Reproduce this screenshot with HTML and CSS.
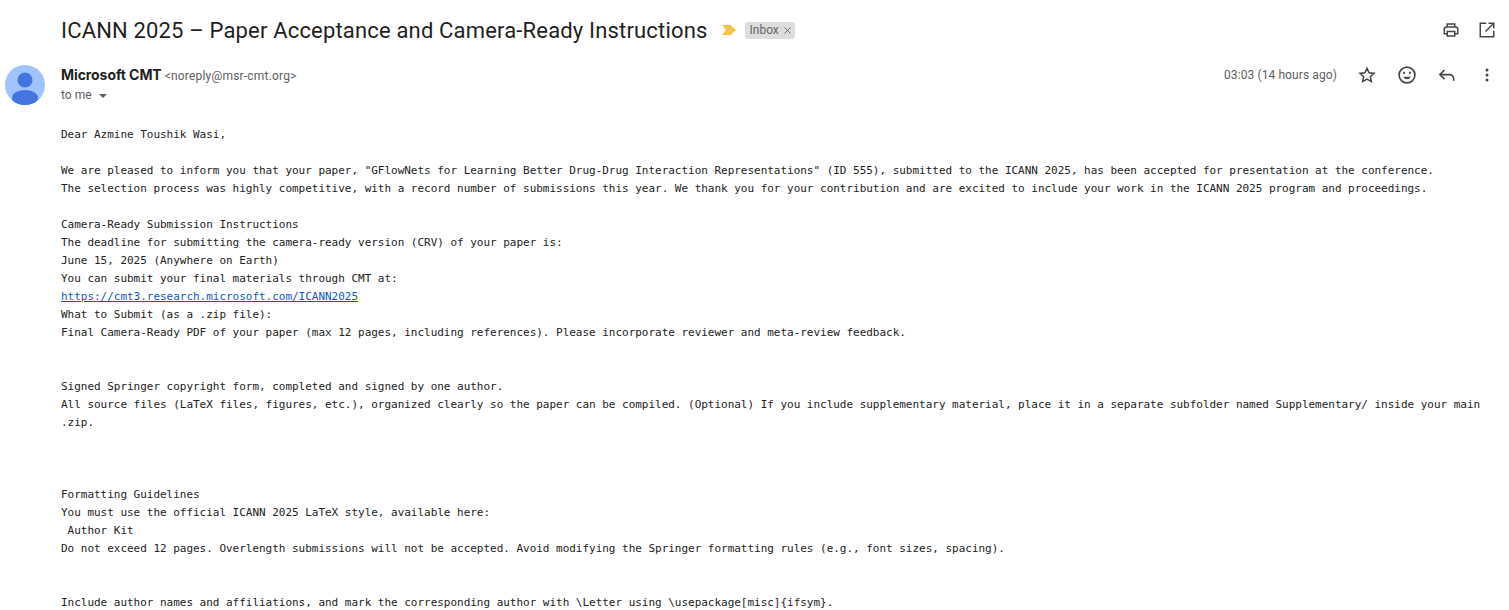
FILE: index.html
```html
<!DOCTYPE html>
<html lang="en">
<head>
  <meta charset="UTF-8">
  <title>ICANN 2025 – Paper Acceptance and Camera-Ready Instructions</title>
  <link rel="stylesheet" href="styles.css">
</head>
<body>
  <div class="subject-row">
    <h1 class="subject">ICANN 2025 – Paper Acceptance and Camera-Ready Instructions</h1>
    <svg class="marker" width="14" height="10" viewBox="0 0 14 10"><path d="M0 0h8.500L14 5l-5.500 5H0l4-5z" fill="#f6c344"/></svg>
    <span class="label">Inbox<svg class="label-x" width="7" height="7" viewBox="0 0 7 7" fill="none" stroke="#666" stroke-width="1"><path d="M.5.500l6 6M6.500.500l-6 6"/></svg></span>
    <div class="subject-tools">
      <svg width="18" height="18" viewBox="0 0 24 24" fill="none" stroke="#444746" stroke-width="2"><path d="M7 8V4h10v4"/><path d="M7 17H3v-6a3 3 0 0 1 3-3h12a3 3 0 0 1 3 3v6h-4"/><path d="M7 14h10v6H7z"/></svg>
      <svg width="18" height="18" viewBox="0 0 24 24" fill="none" stroke="#444746" stroke-width="2"><path d="M11 3H3v18h18v-8"/><path d="M14 3h7v7"/><path d="M21 3 10 14"/></svg>
    </div>
  </div>

  <div class="sender-row">
    <svg class="avatar" width="40" height="40" viewBox="0 0 40 40"><defs><clipPath id="round"><circle cx="20" cy="20" r="20"/></clipPath></defs><g clip-path="url(#round)"><rect width="40" height="40" fill="#a0c3ff"/><circle cx="20" cy="15" r="7.500" fill="#4374e0"/><ellipse cx="20" cy="33" rx="13" ry="8" fill="#4374e0"/></g></svg>
    <div class="sender-info">
      <div class="sender-line"><span class="sender-name">Microsoft CMT</span><span class="sender-mail">&lt;noreply@msr-cmt.org&gt;</span></div>
      <div class="to-line">to me<span class="caret"></span></div>
    </div>
    <div class="sender-tools">
      <span class="time">03:03 (14 hours ago)</span>
      <svg class="tool" width="20" height="20" viewBox="0 0 24 24" fill="none" stroke="#444746" stroke-width="1.800"><path d="M12 4l2.500 5.400 5.900.7-4.400 4 1.200 5.800L12 17l-5.200 2.900L8 14.100l-4.400-4 5.900-.7z"/></svg>
      <svg class="tool" width="20" height="20" viewBox="0 0 24 24" fill="none" stroke="#444746" stroke-width="2"><circle cx="12" cy="12" r="9.500"/><circle cx="8.500" cy="9.500" r="1.300" fill="#444746" stroke="none"/><circle cx="15.500" cy="9.500" r="1.300" fill="#444746" stroke="none"/><path d="M7.500 14c1 2 2.600 3 4.500 3s3.500-1 4.500-3z" fill="#444746" stroke="none"/></svg>
      <svg class="tool" width="20" height="20" viewBox="0 0 24 24" fill="none" stroke="#444746" stroke-width="2"><path d="M9 6 3.500 11.500 9 17"/><path d="M4 11.500h11a5 5 0 0 1 5 5V19"/></svg>
      <svg class="tool" width="20" height="20" viewBox="0 0 24 24" fill="#444746"><circle cx="12" cy="6" r="1.800"/><circle cx="12" cy="12" r="1.800"/><circle cx="12" cy="18" r="1.800"/></svg>
    </div>
  </div>

  <div class="message">Dear Azmine Toushik Wasi,

We are pleased to inform you that your paper, "GFlowNets for Learning Better Drug-Drug Interaction Representations" (ID 555), submitted to the ICANN 2025, has been accepted for presentation at the conference.
The selection process was highly competitive, with a record number of submissions this year. We thank you for your contribution and are excited to include your work in the ICANN 2025 program and proceedings.

Camera-Ready Submission Instructions
The deadline for submitting the camera-ready version (CRV) of your paper is:
June 15, 2025 (Anywhere on Earth)
You can submit your final materials through CMT at:
<a href="#">https://cmt3.research.microsoft.com/ICANN2025</a>
What to Submit (as a .zip file):
Final Camera-Ready PDF of your paper (max 12 pages, including references). Please incorporate reviewer and meta-review feedback.


Signed Springer copyright form, completed and signed by one author.
All source files (LaTeX files, figures, etc.), organized clearly so the paper can be compiled. (Optional) If you include supplementary material, place it in a separate subfolder named Supplementary/ inside your main .zip.



Formatting Guidelines
You must use the official ICANN 2025 LaTeX style, available here:
 Author Kit
Do not exceed 12 pages. Overlength submissions will not be accepted. Avoid modifying the Springer formatting rules (e.g., font sizes, spacing).


Include author names and affiliations, and mark the corresponding author with \Letter using \usepackage[misc]{ifsym}.</div>
</body>
</html>
```
FILE: styles.css
```css
body {
  margin: 0;
  background: #fff;
  color: #222;
  font-family: Roboto, sans-serif;
  height: 610px;
  overflow: hidden;
}

.subject-row {
  display: flex;
  align-items: center;
  height: 44px;
  padding: 8px 13px 0 61px;
}

.subject {
  margin: 0;
  font-size: 22px;
  font-weight: 400;
  letter-spacing: 0.17px;
  color: #1f1f1f;
}

.marker {
  margin-left: 14px;
}

.label {
  display: flex;
  align-items: center;
  gap: 5px;
  margin-left: 9px;
  padding: 0 4px 0 5px;
  height: 17px;
  background: #dddddd;
  border-radius: 3px;
  font-size: 12px;
  color: #666;
}

.subject-tools {
  margin-left: auto;
  display: flex;
  gap: 18px;
}

.sender-row {
  display: flex;
  margin-top: 13px;
  padding-left: 5px;
  height: 59px;
}

.sender-info {
  margin-left: 16px;
}

.sender-line {
  height: 20px;
  line-height: 20px;
}

.sender-name {
  font-family: Inter, sans-serif;
  font-size: 14px;
  font-weight: 700;
  letter-spacing: -0.08px;
  color: #1f1f1f;
}

.sender-mail {
  margin-left: 3px;
  font-size: 12px;
  letter-spacing: 0.2px;
  color: #5e5e5e;
}

.to-line {
  margin-top: 1px;
  font-size: 12px;
  line-height: 18px;
  color: #5e5e5e;
}

.caret {
  display: inline-block;
  margin-left: 7px;
  vertical-align: middle;
  border: 4px solid transparent;
  border-top: 4px solid #5e5e5e;
  border-bottom: 0;
}

.sender-tools {
  margin-left: auto;
  display: flex;
  align-items: center;
  height: 20px;
  padding-right: 12px;
}

.time {
  font-size: 12px;
  letter-spacing: 0.1px;
  color: #5e5e5e;
  margin-right: 20px;
}

.tool {
  margin-right: 20px;
}

.tool:last-child {
  margin-right: 0;
}

.message {
  margin: 2px 18px 0 61px;
  font-family: "DejaVu Sans Mono", monospace;
  font-size: 11px;
  letter-spacing: -0.022px;
  line-height: 18px;
  color: #222;
  white-space: pre-wrap;
}

.message a {
  color: #1155cc;
}
```
